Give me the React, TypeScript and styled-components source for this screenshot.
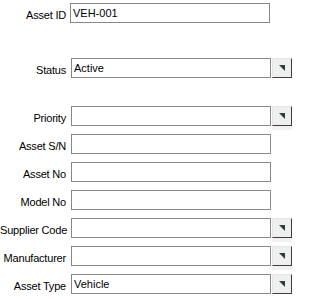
import styled, { createGlobalStyle } from 'styled-components';

const GlobalStyle = createGlobalStyle`
	body {
		margin: 0;
		background: #ffffff;
		font-family: 'Liberation Sans', Arial, sans-serif;
		font-size: 11px;
		color: #000000;
	}
`;

const Form = styled.div`
	width: 322px;
	padding-top: 3px;
	display: flex;
	flex-direction: column;
`;

const Row = styled.div<{ $gap: number }>`
	display: grid;
	grid-template-columns: 66px auto;
	column-gap: 5px;
	align-items: center;
	height: 20px;
	margin-top: ${(p) => p.$gap}px;
`;

const Label = styled.label`
	text-align: right;
	white-space: nowrap;
	margin-top: 4px;
	letter-spacing: -0.2px;
	color: #000000;
`;

const Field = styled.div<{ $nudge?: boolean }>`
	display: flex;
	align-items: stretch;
	height: 20px;
	margin-left: ${(p) => (p.$nudge ? '-1px' : '0')};
`;

const TextBox = styled.div`
	box-sizing: border-box;
	width: 200px;
	height: 20px;
	border: 1px solid #8b8782;
	background: #ffffff;
	padding: 0 2px;
	line-height: 18px;
	white-space: nowrap;
	overflow: hidden;
`;

const DropButton = styled.div<{ $shade?: boolean }>`
	box-sizing: border-box;
	width: 20px;
	height: 20px;
	margin-left: 1px;
	background: #efefef;
	border-top: 1px solid #e4e4e4;
	border-left: 1px solid #e4e4e4;
	border-right: 1px solid #3c3c3c;
	border-bottom: 1px solid #3c3c3c;
	display: flex;
	align-items: center;
	justify-content: center;
	box-shadow: ${(p) => (p.$shade ? '0 4px 0 #f1f1f1' : 'none')};
`;

function Arrow() {
	return (
		<svg width='8' height='8' viewBox='0 0 8 8'>
			<polygon points='1,1 7,1 7,7' fill='#2c3e3e' />
		</svg>
	);
}

type FieldDef = {
	label: string;
	value?: string;
	select?: boolean;
	gap: number;
	shade?: boolean;
	nudge?: boolean;
};

const fields: FieldDef[] = [
	{ label: 'Asset ID', value: 'VEH-001', gap: 0, nudge: true },
	{ label: 'Status', value: 'Active', select: true, gap: 35 },
	{ label: 'Priority', select: true, gap: 28, shade: true },
	{ label: 'Asset S/N', gap: 8 },
	{ label: 'Asset No', gap: 8 },
	{ label: 'Model No', gap: 8 },
	{ label: 'Supplier Code', select: true, gap: 8, shade: true },
	{ label: 'Manufacturer', select: true, gap: 8, shade: true },
	{ label: 'Asset Type', value: 'Vehicle', select: true, gap: 8, shade: true },
];

function App() {
	return (
		<>
			<GlobalStyle />
			<Form>
				{fields.map((f) => (
					<Row key={f.label} $gap={f.gap}>
						<Label>{f.label}</Label>
						<Field $nudge={f.nudge}>
							<TextBox>{f.value}</TextBox>
							{f.select && (
								<DropButton $shade={f.shade}>
									<Arrow />
								</DropButton>
							)}
						</Field>
					</Row>
				))}
			</Form>
		</>
	);
}

export default App;
